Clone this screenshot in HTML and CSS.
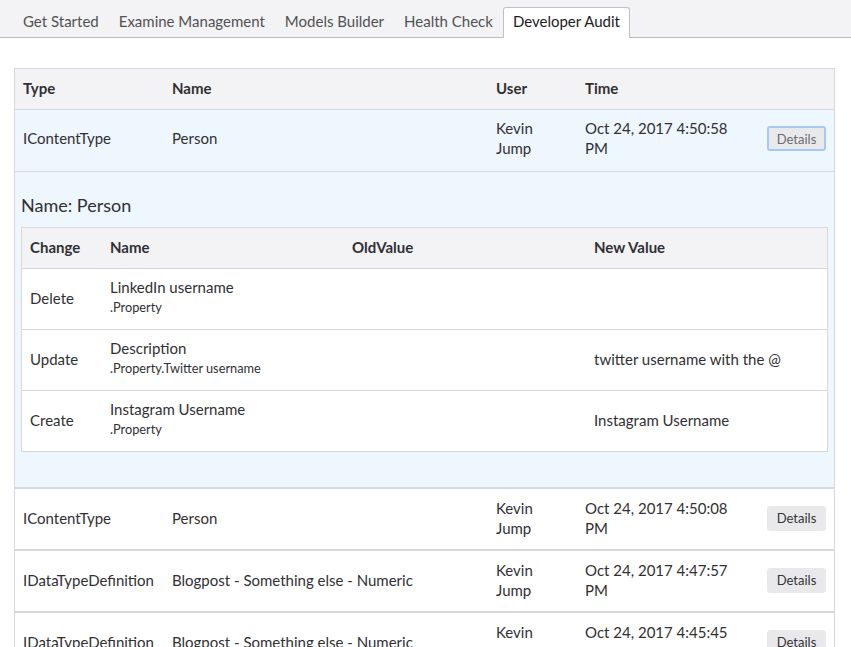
FILE: index.html
```html
<!DOCTYPE html>
<html>
<head>
<meta charset="utf-8">
<link rel="stylesheet" href="styles.css">
</head>
<body>
<div class="tabs">
  <div class="tab">Get Started</div>
  <div class="tab">Examine Management</div>
  <div class="tab">Models Builder</div>
  <div class="tab">Health Check</div>
  <div class="tab active">Developer Audit</div>
</div>
<div class="content">
  <table class="audit">
    <colgroup>
      <col class="c-type"><col class="c-name"><col class="c-user"><col class="c-time"><col class="c-btn">
    </colgroup>
    <thead>
      <tr class="head"><th>Type</th><th>Name</th><th>User</th><th>Time</th><th></th></tr>
    </thead>
    <tbody>
      <tr class="row selected">
        <td>IContentType</td><td>Person</td><td>Kevin Jump</td><td>Oct 24, 2017 4:50:58 PM</td>
        <td><button class="btn focused">Details</button></td>
      </tr>
      <tr class="detail">
        <td colspan="5">
          <h3 class="detail-title">Name: Person</h3>
          <table class="changes">
            <colgroup><col class="d-change"><col class="d-name"><col class="d-old"><col class="d-new"></colgroup>
            <thead>
              <tr class="head"><th>Change</th><th>Name</th><th>OldValue</th><th>New Value</th></tr>
            </thead>
            <tbody>
              <tr><td>Delete</td><td><div>LinkedIn username</div><div class="sub">.Property</div></td><td></td><td></td></tr>
              <tr><td>Update</td><td><div>Description</div><div class="sub">.Property.Twitter username</div></td><td></td><td>twitter username with the @</td></tr>
              <tr><td>Create</td><td><div>Instagram Username</div><div class="sub">.Property</div></td><td></td><td>Instagram Username</td></tr>
            </tbody>
          </table>
        </td>
      </tr>
      <tr class="row">
        <td>IContentType</td><td>Person</td><td>Kevin Jump</td><td>Oct 24, 2017 4:50:08 PM</td>
        <td><button class="btn">Details</button></td>
      </tr>
      <tr class="row">
        <td>IDataTypeDefinition</td><td>Blogpost - Something else - Numeric</td><td>Kevin Jump</td><td>Oct 24, 2017 4:47:57 PM</td>
        <td><button class="btn">Details</button></td>
      </tr>
      <tr class="row">
        <td>IDataTypeDefinition</td><td>Blogpost - Something else - Numeric</td><td>Kevin Jump</td><td>Oct 24, 2017 4:45:45 PM</td>
        <td><button class="btn">Details</button></td>
      </tr>
    </tbody>
  </table>
</div>
</body>
</html>
```
FILE: styles.css
```css
html, body {
  margin: 0;
  padding: 0;
  background: #fff;
  font-family: Lato, "Open Sans", sans-serif;
  font-size: 15px;
  color: #303034;
  overflow: hidden;
}

.tabs {
  display: flex;
  align-items: flex-end;
  height: 37px;
  padding-left: 13px;
  background: #f3f3f5;
  border-bottom: 1px solid #bbbbc0;
}

.tab {
  box-sizing: border-box;
  height: 31px;
  line-height: 27px;
  padding: 0 9px 2px 9px;
  margin-bottom: -1px;
  color: #515154;
  border: 1px solid transparent;
  border-bottom: none;
}

.tab.active {
  background: #fff;
  color: #1b1b24;
  border-color: #c0c0c6;
  border-radius: 3px 3px 0 0;
}

.content {
  padding: 30px 16px 0 14px;
}

.audit {
  width: 821px;
  border-collapse: separate;
  border-spacing: 0;
  table-layout: fixed;
  border: 1px solid #d8d8dc;
  border-bottom: none;
}

.c-type { width: 149px; }
.c-name { width: 324px; }
.c-user { width: 89px; }
.c-time { width: 182px; }
.c-btn { width: 75px; }

.audit th, .audit td {
  text-align: left;
  padding: 9px 8px 11px 8px;
  line-height: 20px;
  vertical-align: middle;
}

.audit th {
  font-weight: 700;
}

.head {
  background: #f3f3f5;
}

.audit > thead > .head > th {
  padding: 9px 8px 11px 8px;
  border-bottom: 1px solid #d8d8dc;
}

.row > td {
  border-bottom: 2px solid #d8d8dc;
}

.row.selected > td {
  background: #eef6fe;
  padding: 8px 8px 13px 8px;
  border-bottom: 1px solid #d8d8dc;
}

.btn {
  font-family: Lato, "Open Sans", sans-serif;
  font-size: 13px;
  color: #343438;
  background: #e9e9eb;
  border: 1px solid #e9e9eb;
  border-radius: 3px;
  height: 25px;
  width: 59px;
  padding: 0;
  line-height: 22px;
  display: block;
}

.btn.focused {
  border: 2px solid #a8c8f4;
  color: #6a6a70;
}

.audit .detail > td {
  background: #eef6fe;
  padding: 21px 6px 35px 6px;
  border-bottom: 2px solid #d8d8dc;
}

.detail-title {
  margin: 0 0 10px 0;
  font-size: 18px;
  font-weight: 400;
  line-height: 24px;
  color: #303034;
}

.changes {
  width: 807px;
  border-collapse: separate;
  border-spacing: 0;
  table-layout: fixed;
  border: 1px solid #d8d8dc;
  background: #fff;
}

.d-change { width: 80px; }
.d-name { width: 242px; }
.d-old { width: 242px; }
.d-new { width: 241px; }

.audit .changes th, .audit .changes td {
  padding: 8px 8px 11px 8px;
  text-align: left;
  line-height: 20px;
  vertical-align: middle;
}

.audit .changes thead th {
  padding: 9px 8px 11px 8px;
  background: #f3f3f5;
  border-bottom: 1px solid #d8d8dc;
}

.changes tbody tr + tr td {
  border-top: 1px solid #d8d8dc;
}

.sub {
  font-size: 12.75px;
  line-height: 21px;
  color: #303034;
}
```
